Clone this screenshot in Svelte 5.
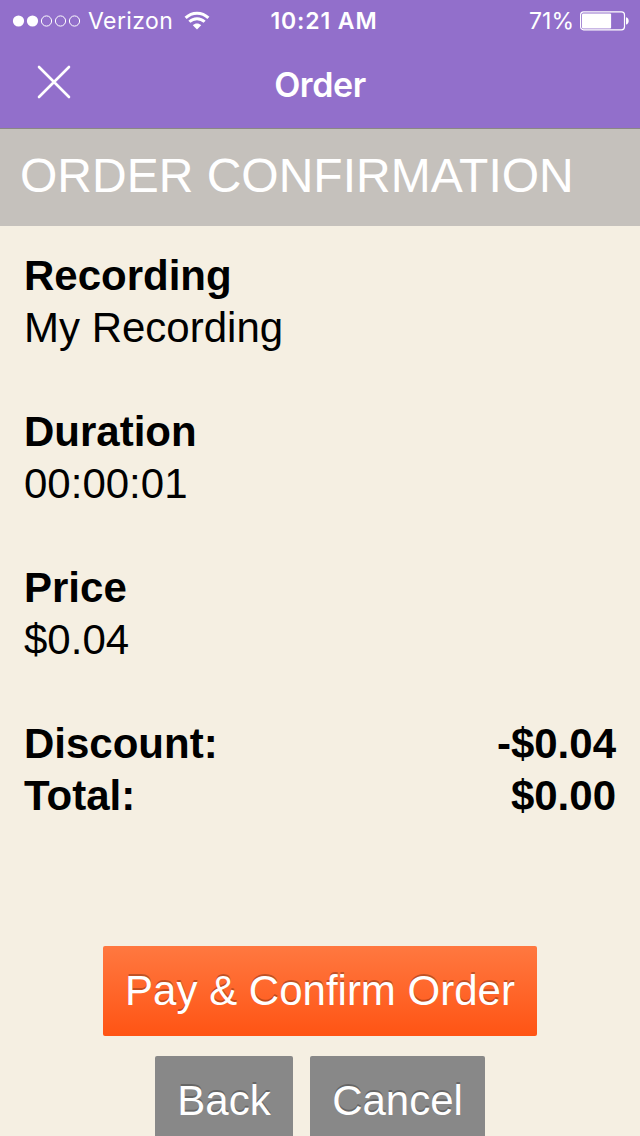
<script lang="ts">
  type Detail = {
    label: string;
    value: string;
  };

  let carrier = 'Verizon';
  let time = '10:21 AM';
  let battery = 71;
  let signal = 2;

  let details: Detail[] = [
    { label: 'Recording', value: 'My Recording' },
    { label: 'Duration', value: '00:00:01' },
    { label: 'Price', value: '$0.04' },
  ];

  let totals: Detail[] = [
    { label: 'Discount:', value: '-$0.04' },
    { label: 'Total:', value: '$0.00' },
  ];
</script>

<div class="screen">
  <header>
    <div class="status-bar">
      <div class="status-left">
        <svg class="signal" width="68" height="14" viewBox="0 0 68 14">
          {#each [0, 1, 2, 3, 4] as i}
            <circle class:filled={i < signal} cx={6.5 + i * 14} cy="7" r={i < signal ? 5.6 : 5.1} />
          {/each}
        </svg>
        <span class="carrier">{carrier}</span>
        <svg class="wifi" width="26" height="20" viewBox="0 0 26 20">
          <path d="M1.6 6.9C8 .6 18 .6 24.4 6.9" />
          <path d="M5.4 10.8C9.6 6.7 16.4 6.7 20.6 10.8" />
          <path class="wedge" d="M8.8 14.2C11.2 11.8 14.8 11.8 17.2 14.2L13 18.4Z" />
        </svg>
      </div>
      <span class="time">{time}</span>
      <div class="status-right">
        <span class="percent">{battery}%</span>
        <svg class="battery" width="50" height="20" viewBox="0 0 50 20">
          <rect class="outline" x="0.6" y="0.9" width="43.9" height="17.9" rx="3" />
          <rect x="2" y="2.4" width={battery * 0.41} height="15" rx="1" />
          <path d="M46 6.2C49.6 6.8 49.6 13 46 13.6Z" />
        </svg>
      </div>
    </div>
    <div class="nav-bar">
      <button class="close" aria-label="Close">
        <svg width="34" height="34" viewBox="0 0 34 34">
          <path d="M2 2L32 32M32 2L2 32" />
        </svg>
      </button>
      <span class="title">Order</span>
      <span></span>
    </div>
  </header>

  <h1>ORDER CONFIRMATION</h1>

  <main>
    {#each details as item}
      <div class="detail">
        <strong>{item.label}</strong>
        <span>{item.value}</span>
      </div>
    {/each}

    <div class="totals">
      {#each totals as row}
        <div class="row">
          <span>{row.label}</span>
          <span>{row.value}</span>
        </div>
      {/each}
    </div>
  </main>

  <div class="actions">
    <button class="btn pay">Pay &amp; Confirm Order</button>
    <div class="secondary">
      <button class="btn back">Back</button>
      <button class="btn cancel">Cancel</button>
    </div>
  </div>
</div>

<style>
  :global(body) {
    background: #f5efe2;
  }

  .screen {
    height: 1136px;
    overflow: hidden;
    display: flex;
    flex-direction: column;
    background: #f5efe2;
    color: #000;
    font-family: "Liberation Sans", Arial, sans-serif;
    font-size: 42px;
    line-height: 52px;
  }

  header {
    box-sizing: border-box;
    flex: none;
    height: 129px;
    background: #926fcb;
    border-bottom: 1px solid #8a8784;
    color: #fff;
    font-family: Inter, sans-serif;
  }

  .status-bar {
    display: grid;
    grid-template-columns: 1fr auto 1fr;
    align-items: center;
    height: 41px;
    padding: 0 10px 0 12px;
    font-size: 23px;
    line-height: 41px;
  }

  .status-left,
  .status-right {
    display: flex;
    align-items: center;
  }

  .status-right {
    justify-content: flex-end;
  }

  .signal circle {
    fill: none;
    stroke: #fff;
    stroke-width: 1;
  }

  .signal circle.filled {
    fill: #fff;
    stroke: none;
  }

  .carrier {
    margin: 1px 0 0 8px;
    letter-spacing: 0.4px;
  }

  .wifi {
    margin-left: 11px;
    fill: none;
    stroke: #fff;
    stroke-width: 3;
  }

  .wifi .wedge {
    fill: #fff;
    stroke: none;
  }

  .time {
    margin: 1px 0 0 6px;
    font-weight: 600;
    letter-spacing: 0.9px;
  }

  .percent {
    margin-top: 1px;
  }

  .battery {
    margin-left: 6px;
    fill: #fff;
  }

  .battery .outline {
    fill: none;
    stroke: #fff;
    stroke-width: 1.2;
  }

  .nav-bar {
    display: grid;
    grid-template-columns: 1fr auto 1fr;
    align-items: center;
    height: 87px;
    padding: 0 37px;
  }

  .close {
    justify-self: start;
    margin-bottom: 5px;
    padding: 0;
    border: none;
    background: none;
    line-height: 0;
  }

  .close path {
    stroke: #fff;
    stroke-width: 2.6;
    stroke-linecap: round;
  }

  .title {
    font-size: 34px;
    font-weight: 600;
    letter-spacing: -0.4px;
  }

  h1 {
    box-sizing: border-box;
    flex: none;
    height: 97px;
    margin: 0;
    padding: 0 20px;
    background: #c5c1bc;
    color: #fff;
    font-size: 48px;
    font-weight: normal;
    line-height: 93px;
  }

  main {
    padding: 24px 24px 0;
  }

  .detail {
    display: flex;
    flex-direction: column;
    margin-bottom: 52px;
  }

  .totals {
    font-weight: bold;
  }

  .row {
    display: flex;
    justify-content: space-between;
  }

  .actions {
    display: flex;
    flex-direction: column;
    align-items: center;
    gap: 20px;
    margin-top: 124px;
  }

  .secondary {
    display: flex;
    gap: 17px;
  }

  .btn {
    height: 90px;
    padding: 0;
    border: none;
    border-radius: 2px;
    background: #888;
    color: #fff;
    font-family: inherit;
    font-size: 42px;
    line-height: 90px;
    text-align: center;
    text-shadow: 0 -2px 0 rgba(0, 0, 0, 0.25);
  }

  .pay {
    width: 434px;
    background: linear-gradient(#ff7840, #ff5414);
  }

  .back {
    width: 138px;
  }

  .cancel {
    width: 175px;
  }
</style>
